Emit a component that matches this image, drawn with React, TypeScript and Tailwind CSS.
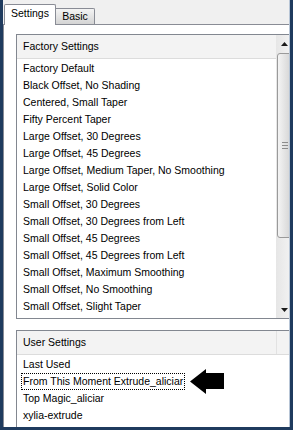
const factory = [
  "Factory Default",
  "Black Offset, No Shading",
  "Centered, Small Taper",
  "Fifty Percent Taper",
  "Large Offset, 30 Degrees",
  "Large Offset, 45 Degrees",
  "Large Offset, Medium Taper, No Smoothing",
  "Large Offset, Solid Color",
  "Small Offset, 30 Degrees",
  "Small Offset, 30 Degrees from Left",
  "Small Offset, 45 Degrees",
  "Small Offset, 45 Degrees from Left",
  "Small Offset, Maximum Smoothing",
  "Small Offset, No Smoothing",
  "Small Offset, Slight Taper",
];

function Tri({ down }: { down?: boolean }) {
  return (
    <svg width="7" height="4" viewBox="0 0 7 4">
      <polygon points={down ? "0,0 7,0 3.5,4" : "3.5,0 7,4 0,4"} fill="#1a1a1a" />
    </svg>
  );
}

function ScrollBar() {
  return (
    <div className="w-[17px] shrink-0 flex flex-col bg-gradient-to-r from-[#e6e6e6] to-[#f4f4f4]">
      <div className="h-[17px] flex items-center justify-center">
        <Tri />
      </div>
      <div className="flex-1 pt-[1px]">
        <div className="h-[185px] mx-[1px] border border-[#9a9a9a] rounded-[3px] bg-gradient-to-r from-[#f4f4f4] to-[#d4d4d4] flex flex-col items-center justify-center gap-[2px]">
          <div className="w-[6px] h-px bg-[#8c8c8c]" />
          <div className="w-[6px] h-px bg-[#8c8c8c]" />
          <div className="w-[6px] h-px bg-[#8c8c8c]" />
        </div>
      </div>
      <div className="h-[17px] flex items-center justify-center">
        <Tri down />
      </div>
    </div>
  );
}

export default function App() {
  return (
    <div className="w-[293px] h-[430px] bg-[#1f3b5e] pl-[3px] pr-[3px] pb-[3px] font-['Liberation_Sans',Arial,sans-serif] text-[10.5px] text-black">
      <div className="h-full bg-[#f0f0f0] border-r border-[#b7c5d6] overflow-hidden flex flex-col">
        <div className="h-[24px] shrink-0 flex items-end pl-[1px]">
          <div className="relative z-10 h-[21px] w-[52px] -mb-px bg-white border border-b-0 border-[#898c95] rounded-t-[2px] flex items-center justify-center pb-[2px]">
            Settings
          </div>
          <div className="h-[16px] w-[39px] bg-gradient-to-b from-[#f4f4f4] to-[#d4d4d4] border border-b-0 border-l-0 border-[#898c95] rounded-tr-[2px] flex items-center justify-center">
            Basic
          </div>
        </div>

        <div className="flex-1 bg-white border-t border-l border-[#898c95] pl-[12px] pt-[9px] overflow-hidden">
          <div className="w-[278px] h-[285px] border border-[#828790] flex">
            <div className="flex-1 flex flex-col">
              <div className="h-[24px] border-b border-[#dcdcdc] bg-[#f3f3f3] flex items-center pl-[6px]">
                Factory Settings
              </div>
              <div className="pt-[1px]">
                {factory.map((f) => (
                  <div key={f} className="h-[17px] flex items-center pl-[6px] whitespace-nowrap">
                    {f}
                  </div>
                ))}
              </div>
            </div>
            <ScrollBar />
          </div>

          <div className="mt-[11px] w-[278px] h-[120px] border border-[#828790]">
            <div className="h-[24px] border-b border-[#dcdcdc] bg-[#f3f3f3] flex">
              <div className="w-[260px] border-r border-[#e2e2e2] flex items-center pl-[6px]">
                User Settings
              </div>
            </div>
            <div className="pt-[1px]">
              <div className="h-[17px] flex items-center pl-[6px]">Last Used</div>
              <div className="h-[17px] flex items-center pl-[4px]">
                <span className="h-[17px] flex items-center border border-dotted border-black px-[1px] whitespace-nowrap">
                  From This Moment Extrude_aliciar
                </span>
                <svg width="34" height="26" viewBox="0 0 34 26" className="ml-[5px] shrink-0">
                  <polygon points="0,12.5 16,0 16,4 34,4 34,20 16,20 16,25" fill="#000" />
                </svg>
              </div>
              <div className="h-[17px] flex items-center pl-[6px]">Top Magic_aliciar</div>
              <div className="h-[17px] flex items-center pl-[6px]">xylia-extrude</div>
            </div>
          </div>
        </div>
      </div>
    </div>
  );
}
